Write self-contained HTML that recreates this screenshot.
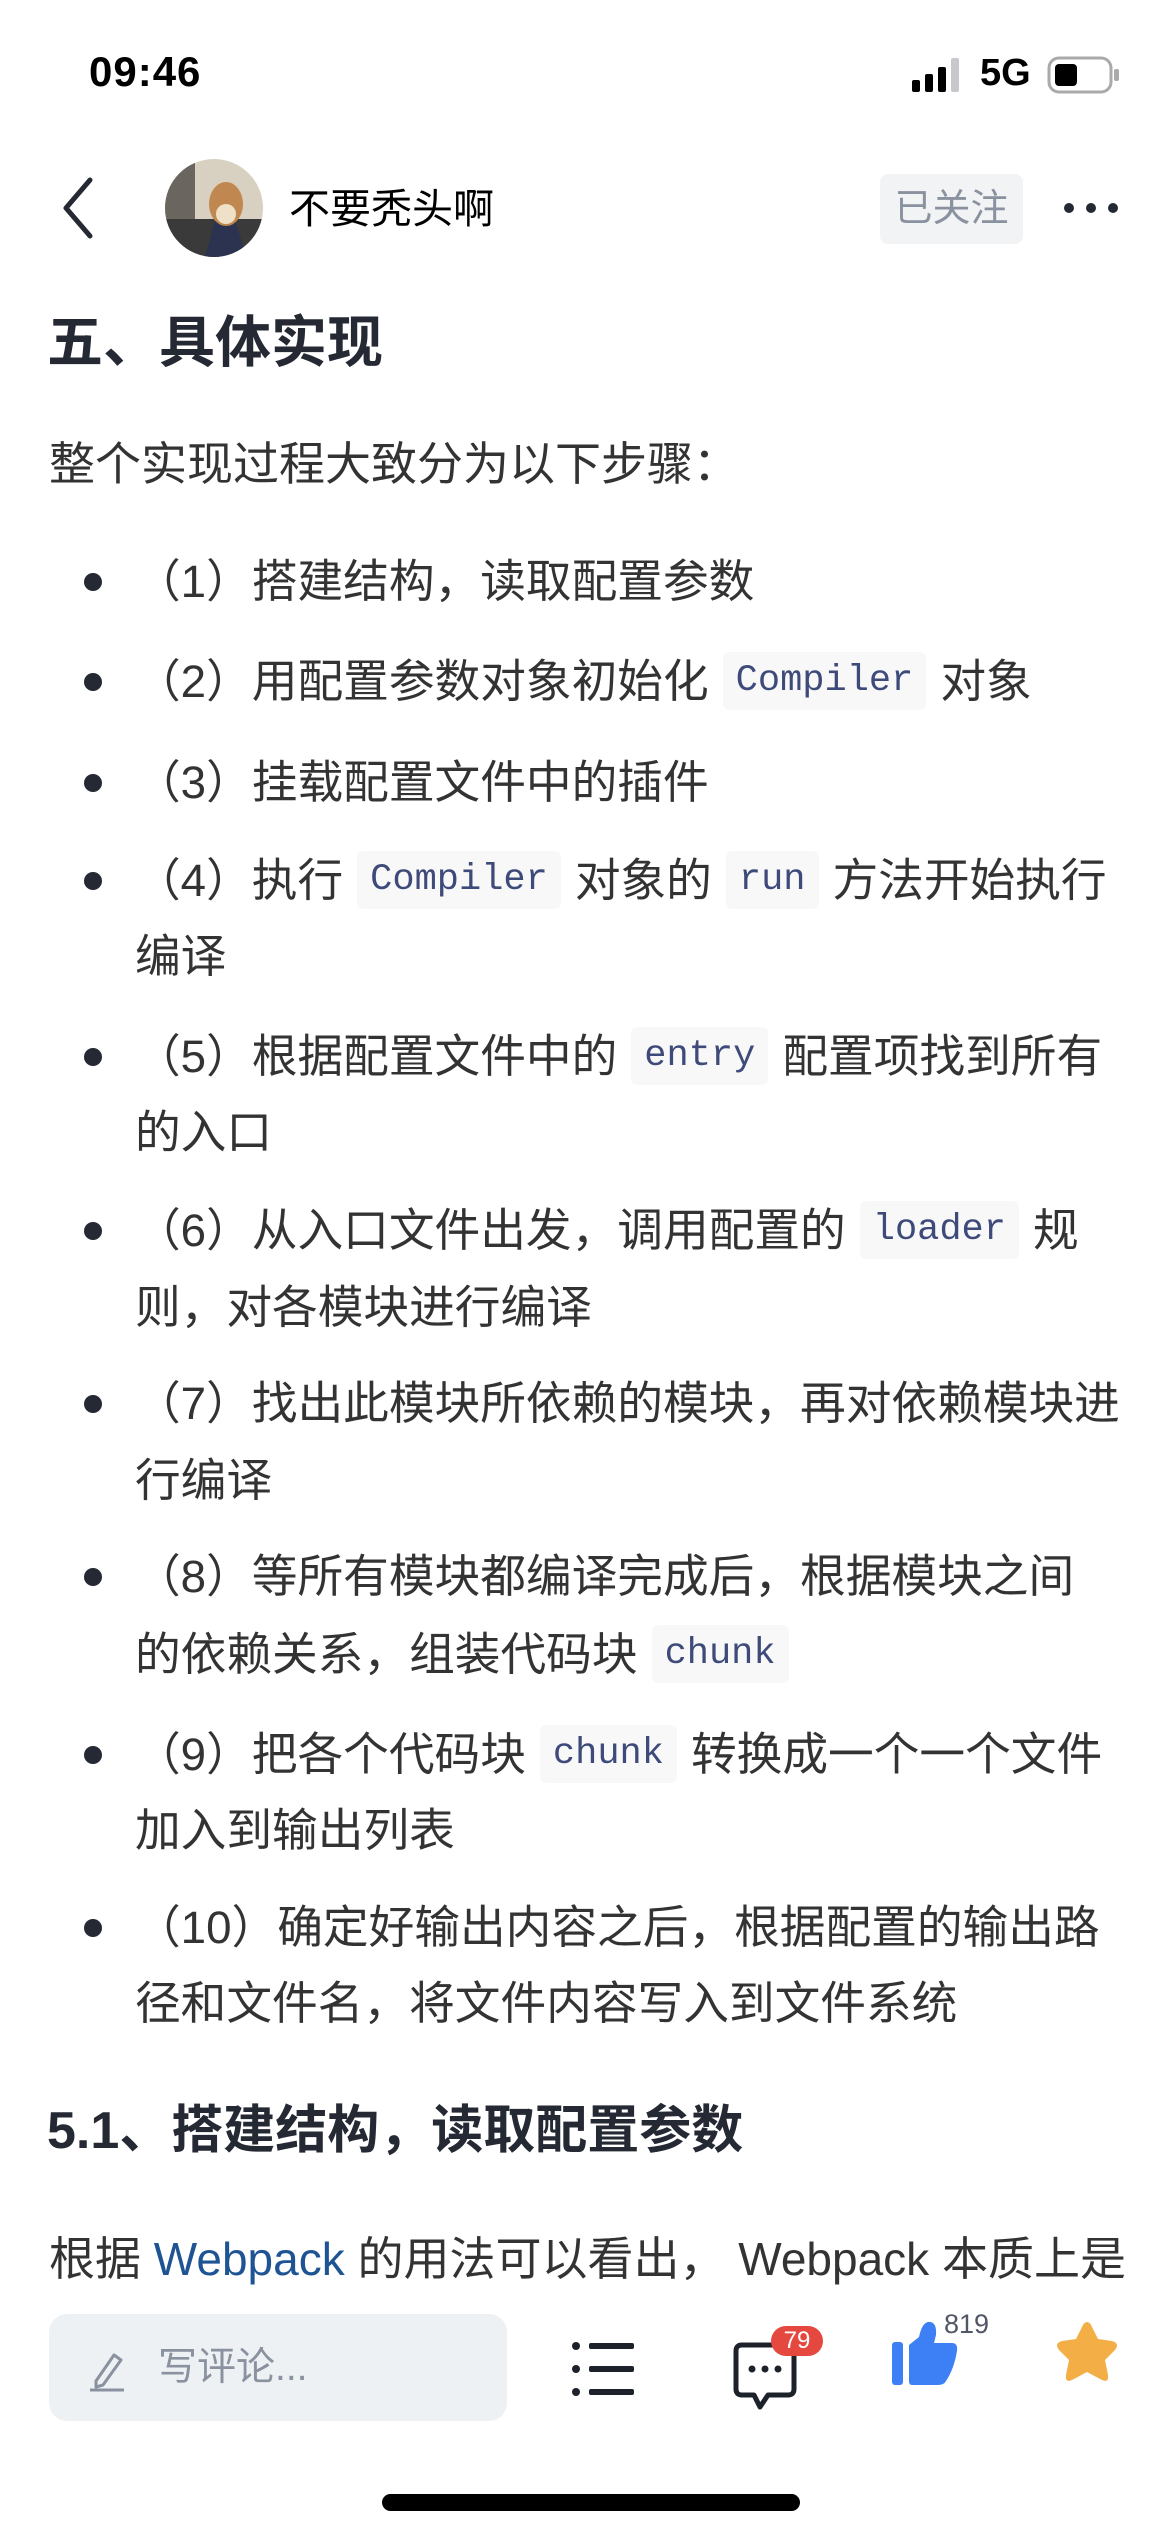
<!DOCTYPE html>
<html><head><meta charset="utf-8">
<style>
*{margin:0;padding:0;box-sizing:border-box}
body{width:1170px;height:2532px;background:#fff;position:relative;overflow:hidden;font-family:"Liberation Sans","Noto Sans CJK SC",sans-serif;color:#333}
.abs{position:absolute;white-space:nowrap}
.ln{position:absolute;left:135px;height:76px;line-height:76px;font-size:45.7px;white-space:nowrap;color:#333}
.dot{position:absolute;left:84px;width:18px;height:18px;border-radius:50%;background:#252933}
code{display:inline-block;font-family:"Liberation Mono",monospace;font-size:37px;color:#3e4a7a;background:#f8f8f8;border-radius:6px;padding:0 13px;height:58px;line-height:58px;margin:0 14px;vertical-align:middle;position:relative;top:-4px}
</style></head><body>
<div class="abs" style="left:89px;top:48px;font-size:42px;font-weight:bold;color:#000;letter-spacing:1px">09:46</div>
<svg class="abs" style="left:912px;top:58px" width="50" height="34"><rect x="0" y="22" width="8" height="12" rx="2" fill="#000"/><rect x="13" y="16" width="8" height="18" rx="2" fill="#000"/><rect x="26" y="9" width="8" height="25" rx="2" fill="#000"/><rect x="39" y="0" width="8" height="34" rx="2" fill="#c7c7cc"/></svg>
<div class="abs" style="left:980px;top:52px;font-size:38px;font-weight:bold;color:#000">5G</div>
<svg class="abs" style="left:1047px;top:56px" width="74" height="38"><rect x="2" y="2" width="62" height="34" rx="10" fill="none" stroke="#aaa" stroke-width="3"/><rect x="8" y="8" width="22" height="22" rx="4" fill="#000"/><rect x="67" y="13" width="5" height="12" rx="2" fill="#aaa"/></svg>

<svg class="abs" style="left:58px;top:176px" width="40" height="64"><path d="M32 4 L8 32 L32 60" fill="none" stroke="#252933" stroke-width="5" stroke-linecap="round" stroke-linejoin="round"/></svg>
<svg class="abs" style="left:165px;top:159px" width="98" height="98"><defs><clipPath id="c"><circle cx="49" cy="49" r="49"/></clipPath></defs><g clip-path="url(#c)"><rect width="98" height="98" fill="#d8d0c0"/><rect x="0" y="0" width="30" height="98" fill="#6b6560"/><rect x="0" y="60" width="98" height="38" fill="#3a3a3a"/><path d="M40 98 L50 62 L70 62 L82 98Z" fill="#2c3350"/><ellipse cx="61" cy="45" rx="17" ry="22" fill="#c08850"/><ellipse cx="61" cy="55" rx="10" ry="10" fill="#efe0c8"/></g></svg>
<div class="abs" style="left:289px;top:175px;font-size:41px;color:#000">不要秃头啊</div>
<div class="abs" style="left:880px;top:174px;width:143px;height:70px;background:#f2f3f5;border-radius:8px;font-size:38px;line-height:70px;text-align:center;color:#8a919f">已关注</div>
<svg class="abs" style="left:1062px;top:198px" width="58" height="20"><circle cx="7" cy="10" r="5" fill="#252933"/><circle cx="29" cy="10" r="5" fill="#252933"/><circle cx="51" cy="10" r="5" fill="#252933"/></svg>

<div class="abs" style="left:47px;top:309px;font-size:56px;font-weight:bold;color:#252933;line-height:68px">五、具体实现</div>
<div class="abs" style="left:49px;top:426px;font-size:46px;line-height:76px;color:#333">整个实现过程大致分为以下步骤：</div>

<div class="dot" style="top:573px"></div><div class="ln" style="top:544px">（1）搭建结构，读取配置参数</div>
<div class="dot" style="top:673px"></div><div class="ln" style="top:644px">（2）用配置参数对象初始化<code>Compiler</code>对象</div>
<div class="dot" style="top:774px"></div><div class="ln" style="top:745px">（3）挂载配置文件中的插件</div>
<div class="dot" style="top:872px"></div><div class="ln" style="top:843px">（4）执行<code>Compiler</code>对象的<code>run</code>方法开始执行</div>
<div class="ln" style="top:919px">编译</div>
<div class="dot" style="top:1048px"></div><div class="ln" style="top:1019px">（5）根据配置文件中的<code>entry</code>配置项找到所有</div>
<div class="ln" style="top:1095px">的入口</div>
<div class="dot" style="top:1222px"></div><div class="ln" style="top:1193px">（6）从入口文件出发，调用配置的<code>loader</code>规</div>
<div class="ln" style="top:1270px">则，对各模块进行编译</div>
<div class="dot" style="top:1395px"></div><div class="ln" style="top:1366px">（7）找出此模块所依赖的模块，再对依赖模块进</div>
<div class="ln" style="top:1443px">行编译</div>
<div class="dot" style="top:1568px"></div><div class="ln" style="top:1539px">（8）等所有模块都编译完成后，根据模块之间</div>
<div class="ln" style="top:1617px">的依赖关系，组装代码块<code>chunk</code></div>
<div class="dot" style="top:1746px"></div><div class="ln" style="top:1717px">（9）把各个代码块<code>chunk</code>转换成一个一个文件</div>
<div class="ln" style="top:1793px">加入到输出列表</div>
<div class="dot" style="top:1919px"></div><div class="ln" style="top:1890px">（10）确定好输出内容之后，根据配置的输出路</div>
<div class="ln" style="top:1966px">径和文件名，将文件内容写入到文件系统</div>

<div class="abs" style="left:47px;top:2098px;font-size:52px;font-weight:bold;color:#252933;line-height:66px">5.1、搭建结构，读取配置参数</div>
<div class="abs" style="left:49px;top:2221px;font-size:46px;line-height:76px;color:#333">根据 <span style="color:#1e5494">Webpack</span> 的用法可以看出， Webpack 本质上是</div>

<div class="abs" style="left:0;top:2298px;width:1170px;height:234px;background:#fff"></div>
<div class="abs" style="left:49px;top:2314px;width:458px;height:107px;background:#eef1f4;border-radius:18px"></div>
<svg class="abs" style="left:88px;top:2351px" width="40" height="42"><path d="M8 30 L26 4 L33 9 L15 34 L8 36 Z" fill="none" stroke="#8a919f" stroke-width="3" stroke-linejoin="round"/><path d="M2 39 L36 39" stroke="#8a919f" stroke-width="3"/></svg>
<div class="abs" style="left:158px;top:2343px;font-size:39px;color:#8a919f;line-height:50px">写评论...</div>

<svg class="abs" style="left:572px;top:2339px" width="64" height="60"><circle cx="4" cy="7" r="4" fill="#1d2129"/><circle cx="4" cy="30" r="4" fill="#1d2129"/><circle cx="4" cy="53" r="4" fill="#1d2129"/><rect x="17" y="4" width="45" height="6" rx="2" fill="#1d2129"/><rect x="17" y="27" width="45" height="6" rx="2" fill="#1d2129"/><rect x="17" y="50" width="45" height="6" rx="2" fill="#1d2129"/></svg>
<svg class="abs" style="left:732px;top:2339px" width="70" height="72"><path d="M10 6 H56 Q62 6 62 12 V50 Q62 56 56 56 H36 L28 68 L22 56 H10 Q4 56 4 50 V12 Q4 6 10 6Z" fill="none" stroke="#1d2129" stroke-width="5" stroke-linejoin="round"/><circle cx="20" cy="30" r="3.5" fill="#1d2129"/><circle cx="33" cy="30" r="3.5" fill="#1d2129"/><circle cx="46" cy="30" r="3.5" fill="#1d2129"/></svg>
<div class="abs" style="left:771px;top:2326px;width:52px;height:30px;border-radius:15px;background:#e5483f;color:#fff;font-size:24px;line-height:30px;text-align:center">79</div>
<svg class="abs" style="left:892px;top:2321px" width="68" height="66"><rect x="0" y="21" width="11" height="43" rx="3" fill="#3d80f6"/><path d="M17 24 L27 16 Q30 2 36 1 Q45 0 44 14 L42 22 H60 Q66 22 65 30 Q62 48 54 60 Q52 64 46 64 H20 Q17 64 17 60Z" fill="#3d80f6"/></svg>
<div class="abs" style="left:944px;top:2309px;font-size:27px;color:#515767">819</div>
<svg class="abs" style="left:1052px;top:2319px" width="70" height="68"><path d="M35 3 Q38 3 40 8 L46 20 L60 22 Q68 24 63 31 L53 41 L56 56 Q57 64 50 61 L35 53 L20 61 Q13 64 14 56 L17 41 L7 31 Q2 24 10 22 L24 20 L30 8 Q32 3 35 3Z" fill="#f3af45"/></svg>

<div class="abs" style="left:382px;top:2494px;width:418px;height:17px;border-radius:9px;background:#000"></div>
</body></html>
